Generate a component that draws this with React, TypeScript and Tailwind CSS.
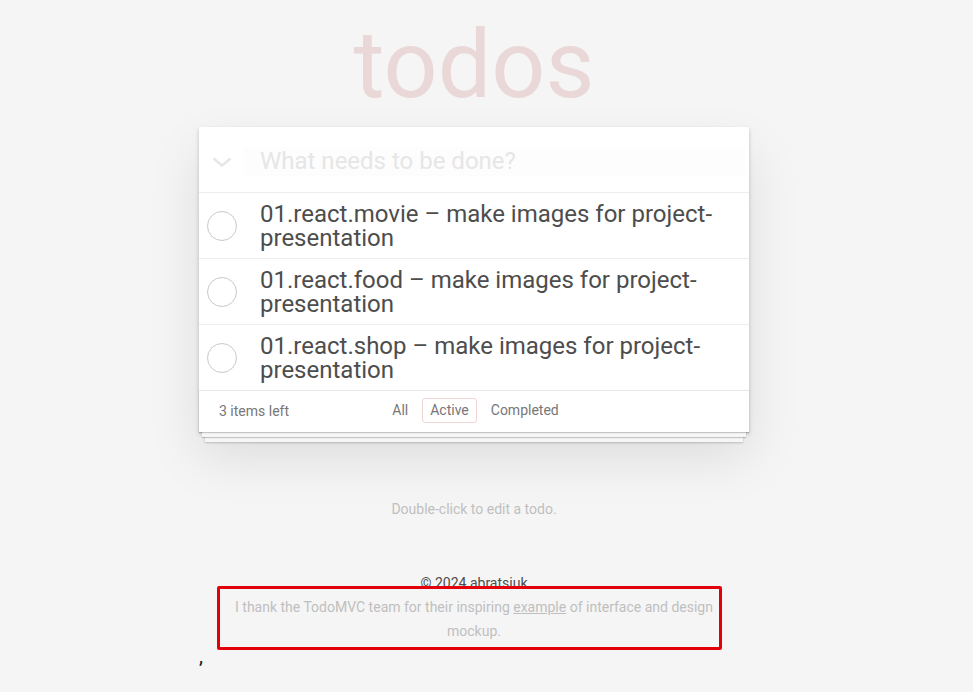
import { useState } from 'react'

type Todo = { id: number; title: string; completed: boolean }

const initialTodos: Todo[] = [
  { id: 1, title: '01.react.movie – make images for project-presentation', completed: false },
  { id: 2, title: '01.react.food – make images for project-presentation', completed: false },
  { id: 3, title: '01.react.shop – make images for project-presentation', completed: false },
]

const filters = ['All', 'Active', 'Completed']

export default function App() {
  const [todos] = useState<Todo[]>(initialTodos)
  const [filter, setFilter] = useState('Active')

  const left = todos.filter((t) => !t.completed).length

  return (
    <div className="min-h-screen bg-[#f5f5f5] pr-[25px] font-['Roboto',_'Liberation_Sans',_sans-serif]">
      <div className="mx-auto w-[550px]">
        <h1 className="pt-[17px] text-center text-[95px] leading-[95px] font-normal text-[#ead7d7]">todos</h1>

        <section className="mt-[15px] bg-white shadow-[0_2px_4px_0_rgba(0,0,0,0.2),0_25px_50px_0_rgba(0,0,0,0.1)]">
          <header className="flex h-[65px] items-center">
            <button className="flex w-[45px] items-center justify-center pt-[4px]">
              <svg width="20" height="10" viewBox="0 0 20 10" fill="none">
                <path d="M1.5 1.5 L10 8.5 L18.5 1.5" stroke="#e6e6e6" strokeWidth="2.5" />
              </svg>
            </button>
            <div className="mt-[3px] mr-[4px] flex h-[29px] flex-1 items-center bg-[#fdfdfd] px-4 text-[24px] text-[#e6e6e6]">
              What needs to be done?
            </div>
          </header>

          <ul>
            {todos.map((todo) => (
              <li key={todo.id} className="flex items-center border-t border-[#ededed]">
                <span className="ml-2 h-[30px] w-[30px] flex-shrink-0 rounded-full border border-[#c9c9c9]" />
                <label className="ml-[23px] pr-[15px] pt-[9px] pb-2 text-[24px] leading-6 text-[#4d4d4d]">
                  {todo.title}
                </label>
              </li>
            ))}
          </ul>

          <footer className="grid h-[42px] grid-cols-[1fr_auto_1fr] items-center border-t border-[#e6e6e6] px-5 pb-[2px] text-sm text-[#777] shadow-[0_1px_1px_rgba(0,0,0,0.2),0_8px_0_-3px_#f6f6f6,0_9px_1px_-3px_rgba(0,0,0,0.2),0_16px_0_-6px_#f6f6f6,0_17px_2px_-6px_rgba(0,0,0,0.2)]">
            <span>{left} items left</span>
            <ul className="flex pl-[3px]">
              {filters.map((f) => (
                <li key={f}>
                  <a
                    onClick={() => setFilter(f)}
                    className={`mx-[3px] block rounded-[3px] border px-[7px] py-[2px] leading-[19px] ${
                      filter === f ? 'border-[#efd5d5]' : 'border-transparent'
                    }`}
                  >
                    {f}
                  </a>
                </li>
              ))}
            </ul>
            <span />
          </footer>
        </section>

        <p className="mt-[67px] text-center text-sm leading-5 text-[#bfbfbf]">Double-click to edit a todo.</p>

        <p className="mt-[54px] text-center text-sm leading-5 text-[#4d4d4d]">© 2024 abratsiuk</p>
        <div className="relative mt-[2px]">
          <p className="mx-auto w-[490px] text-center text-sm leading-6 text-[#bfbfbf]">
            I thank the TodoMVC team for their inspiring <a className="underline">example</a> of interface and design
            mockup.
          </p>
          {/* highlight box */}
          <div className="pointer-events-none absolute top-[-9px] left-[18px] h-[64px] w-[505px] rounded-[2px] border-[3px] border-[#e3000b]" />
        </div>
        <div className="text-[18px] leading-7 font-medium text-[#222]">,</div>
      </div>
    </div>
  )
}
